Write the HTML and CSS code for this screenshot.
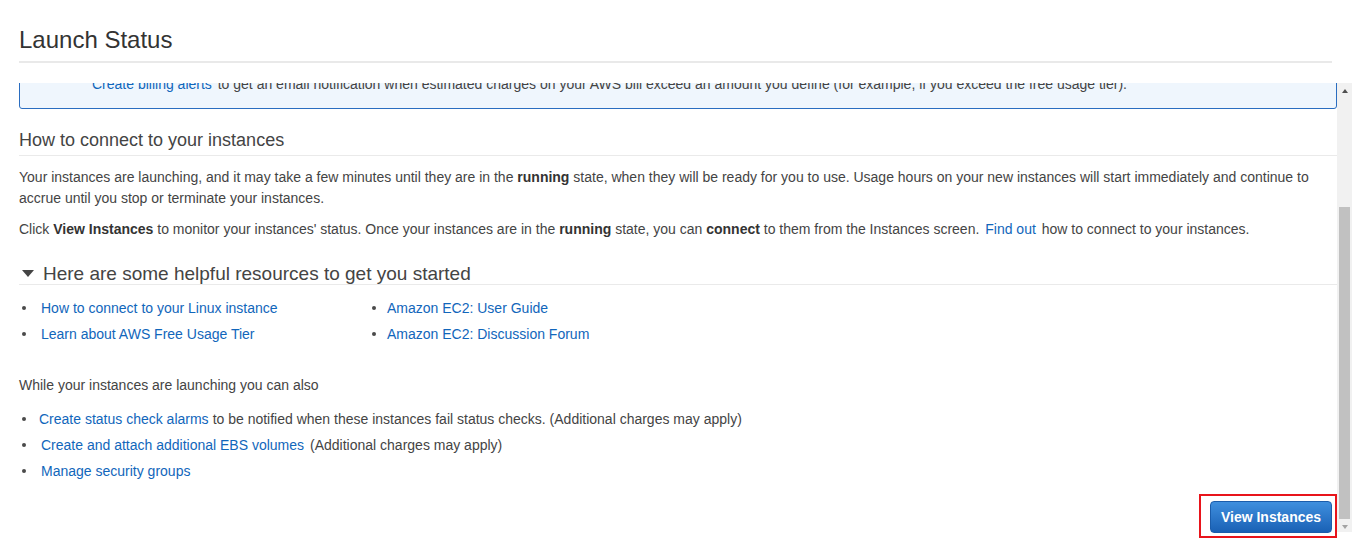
FILE: index.html
```html
<!DOCTYPE html>
<html lang="en">
<head>
<meta charset="utf-8">
<title>Launch Status</title>
<link rel="stylesheet" href="styles.css">
</head>
<body>
<header class="page-header">
  <h1 class="page-title">Launch Status</h1>
</header>
<main class="main">
  <div class="content">
    <div class="info-box">
      <a class="link link-info" href="#">Create billing alerts</a> to get an email notification when estimated charges on your AWS bill exceed an amount you define (for example, if you exceed the free usage tier).
    </div>

    <h3 class="section-title">How to connect to your instances</h3>
    <p class="text text-first">Your instances are launching, and it may take a few minutes until they are in the <b>running</b> state, when they will be ready for you to use. Usage hours on your new instances will start immediately and continue to accrue until you stop or terminate your instances.</p>
    <p class="text">Click <b>View Instances</b> to monitor your instances' status. Once your instances are in the <b>running</b> state, you can <b>connect</b> to them from the Instances screen. <a class="link link-spaced" href="#">Find out</a> how to connect to your instances.</p>

    <h3 class="toggle-title">
      <svg class="caret" width="12" height="7" viewBox="0 0 12 7"><polygon points="0,0 12,0 6,7" fill="#444"/></svg>
      <span>Here are some helpful resources to get you started</span>
    </h3>
    <ul class="res-grid">
      <li class="res-item"><a class="link" href="#">How to connect to your Linux instance</a></li>
      <li class="res-item res-item-right"><a class="link" href="#">Amazon EC2: User Guide</a></li>
      <li class="res-item"><a class="link" href="#">Learn about AWS Free Usage Tier</a></li>
      <li class="res-item res-item-right"><a class="link" href="#">Amazon EC2: Discussion Forum</a></li>
    </ul>

    <p class="text text-also">While your instances are launching you can also</p>
    <ul class="also-list">
      <li class="res-item res-item-tight"><a class="link" href="#">Create status check alarms</a> to be notified when these instances fail status checks. (Additional charges may apply)</li>
      <li class="res-item"><a class="link link-after" href="#">Create and attach additional EBS volumes</a> (Additional charges may apply)</li>
      <li class="res-item"><a class="link" href="#">Manage security groups</a></li>
    </ul>

    <div class="footer">
      <div class="highlight">
        <button class="btn-primary" type="button">View Instances</button>
      </div>
    </div>
  </div>
  <div class="scrollbar">
    <div class="sb-btn"><span class="sb-arrow-up"></span></div>
    <div class="sb-track"><div class="sb-thumb"></div></div>
    <div class="sb-btn"><span class="sb-arrow-down"></span></div>
  </div>
</main>
</body>
</html>
```

FILE: styles.css
```css
html, body {
  margin: 0;
  padding: 0;
  background: #fff;
}
body {
  font-family: "Liberation Sans", Arial, Helvetica, sans-serif;
  font-size: 14px;
  color: #444;
  height: 543px;
  overflow: hidden;
}
.page-header {
  padding: 0 32px 0 19px;
  margin-bottom: 20px;
}
.page-title {
  margin: 0;
  padding: 25px 0 6px;
  font-size: 24px;
  line-height: 30px;
  font-weight: normal;
  color: #333;
  border-bottom: 2px solid #e9e9e9;
}
.main {
  display: flex;
  padding-right: 12px;
  height: 460px;
}
.content {
  flex: 1;
  min-width: 0;
  padding-left: 19px;
  overflow: hidden;
}
.link {
  color: #1166bb;
  text-decoration: none;
}
.link-info {
  margin-right: 2px;
}
.link-spaced {
  margin: 0 2px;
}
.info-box {
  margin-top: -20px;
  border: 1px solid #2a6dc0;
  border-radius: 3px;
  background: #eff6fd;
  padding: 10px 15px 14px 72px;
  line-height: 20px;
  color: #444;
}
.section-title {
  margin: 21px 0 0;
  padding-bottom: 5px;
  font-size: 18px;
  line-height: 20px;
  font-weight: normal;
  color: #444;
  border-bottom: 1px solid #eaeaea;
}
.text {
  margin: 10px 0 0;
  line-height: 21px;
}
.text-first {
  margin-top: 11px;
}
.text b {
  color: #333;
}
.toggle-title {
  margin: 23px 0 0;
  display: flex;
  align-items: center;
  gap: 9px;
  padding-left: 3px;
  font-size: 19px;
  line-height: 21px;
  font-weight: normal;
  color: #444;
  border-bottom: 1px solid #eaeaea;
}
.caret {
  display: block;
  margin-top: -1px;
}
.res-grid {
  list-style: none;
  margin: 13px 0 0;
  padding: 0;
  display: grid;
  grid-template-columns: 350px 1fr;
  row-gap: 6px;
}
.res-item {
  display: flex;
  align-items: center;
  line-height: 20px;
  white-space: nowrap;
}
.res-item::before {
  content: "";
  flex: 0 0 4px;
  width: 4px;
  height: 4px;
  border-radius: 50%;
  background: #4a4a4a;
  margin: 0 15px 0 3px;
}
.res-item a {
  margin-right: 4px;
}
.res-item .link-after {
  margin-right: 6px;
}
.res-item-right::before {
  margin-right: 11px;
}
.res-item-tight::before {
  margin-right: 13px;
}
.text-also {
  margin-top: 31px;
  line-height: 20px;
}
.also-list {
  list-style: none;
  margin: 14px 0 0;
  padding: 0;
  display: flex;
  flex-direction: column;
  gap: 6px;
}
.footer {
  margin-top: 13px;
  display: flex;
  justify-content: flex-end;
}
.highlight {
  border: 2px solid #e8141b;
  padding: 5px 3px 3px 9px;
}
.btn-primary {
  display: block;
  width: 122px;
  height: 32px;
  border: 1px solid #1b5dab;
  border-radius: 4px;
  background: linear-gradient(#3f8fde, #1a61b5);
  color: #fff;
  font-family: "Liberation Sans", Arial, Helvetica, sans-serif;
  font-size: 14px;
  font-weight: bold;
  padding: 0;
}
.scrollbar {
  flex: 0 0 15px;
  align-self: flex-start;
  height: 449px;
  background: #f1f1f1;
  display: flex;
  flex-direction: column;
}
.sb-btn {
  flex: 0 0 15px;
  display: flex;
  align-items: center;
  justify-content: center;
}
.sb-arrow-up {
  width: 0;
  height: 0;
  border-left: 3.5px solid transparent;
  border-right: 3.5px solid transparent;
  border-bottom: 4px solid #505050;
}
.sb-arrow-down {
  width: 0;
  height: 0;
  border-left: 3.5px solid transparent;
  border-right: 3.5px solid transparent;
  border-top: 4px solid #a3a3a3;
}
.sb-track {
  flex: 1;
  padding: 0 2px;
}
.sb-thumb {
  margin-top: 109px;
  height: 312px;
  background: #c1c1c1;
}
```
